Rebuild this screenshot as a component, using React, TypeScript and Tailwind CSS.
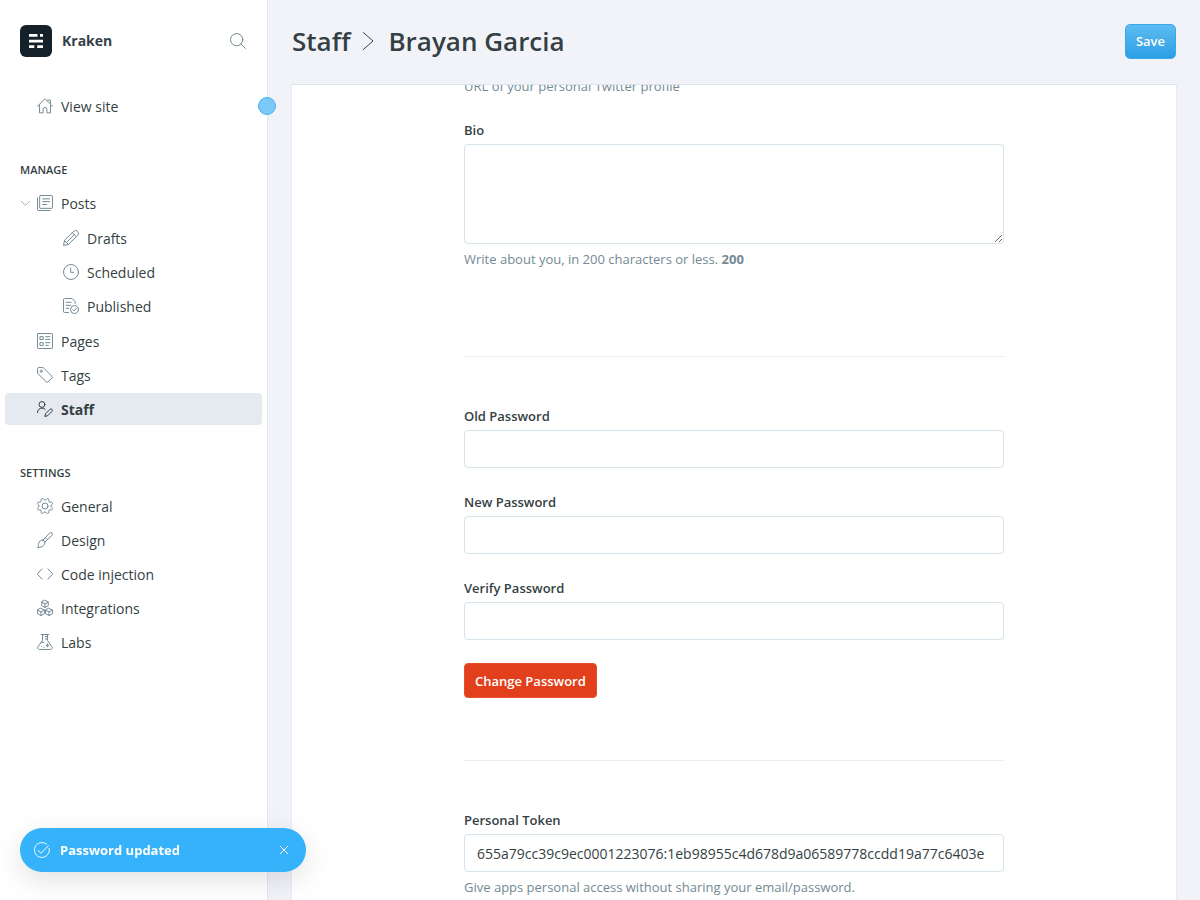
import { useState } from 'react';
import type { ReactNode } from 'react';

function Icon({ children, className = 'size-4', strokeWidth = 1.5 }: { children: ReactNode; className?: string; strokeWidth?: number }) {
  return (
    <svg
      viewBox="0 0 24 24"
      fill="none"
      stroke="currentColor"
      strokeWidth={strokeWidth}
      strokeLinecap="round"
      strokeLinejoin="round"
      aria-hidden="true"
      className={`shrink-0 overflow-visible ${className}`}
    >
      {children}
    </svg>
  );
}

const icons = {
  house: (
    <>
      <path d="M.8 12.5 10.9 2a1.5 1.5 0 0 1 2.2 0l10.1 10.5" />
      <path d="M3.8 11v11.3h5.3v-5.2a2.9 2.9 0 0 1 5.8 0v5.2h5.3V11" />
      <path d="M15.8 3.2h4.4v5" />
    </>
  ),
  posts: (
    <>
      <rect x="4" y=".8" width="19.2" height="19.2" rx="1" />
      <path d="M.8 4v17.7a1.5 1.5 0 0 0 1.5 1.5H20M8.5 5.8h10.3M8.5 10h10.3M8.5 14.3h6.2" />
    </>
  ),
  pencil: (
    <>
      <path d="m2.3 15.8-1.5 7.4 7.4-1.5L22.1 7.8a3.6 3.6 0 0 0 0-5.2l-.7-.7a3.6 3.6 0 0 0-5.2 0z" />
      <path d="m14 4.1 5.9 5.9M2.3 15.8l5.9 5.9M5.2 18.8 17 7" />
    </>
  ),
  clock: (
    <>
      <circle cx="12" cy="12" r="11.2" />
      <path d="M11.5 6v6.5h4.5" />
    </>
  ),
  published: (
    <>
      <path d="M8.5 21.7H2.3a1.5 1.5 0 0 1-1.5-1.5V2.3A1.5 1.5 0 0 1 2.3.8h11.3l4.6 4.6V8M4.8 6.5h7.5M4.8 11h6.5M4.8 15.5h4" />
      <circle cx="17.3" cy="17.3" r="6" />
      <path d="m14.7 17.5 1.9 1.9 3.4-4" />
    </>
  ),
  pages: (
    <>
      <rect x=".8" y=".8" width="22.4" height="22.4" rx="1" />
      <path d="M5 5.5h4.3v4.3H5zM5 14.5h4.3v4.3H5zM13 5.5h6.3M13 9.5h6.3M13 14.5h6.3M13 18.5h4" />
    </>
  ),
  tag: (
    <>
      <path d="M.8 8V2.3A1.5 1.5 0 0 1 2.3.8H8a3 3 0 0 1 2.1.9l12.5 12.5a1.5 1.5 0 0 1 0 2.1l-6.3 6.3a1.5 1.5 0 0 1-2.1 0L1.7 10.1A3 3 0 0 1 .8 8z" />
      <circle cx="6.4" cy="6.4" r="1.7" />
    </>
  ),
  staff: (
    <>
      <circle cx="7.5" cy="5.2" r="4.4" />
      <path d="M.8 17.3c0-4 2.8-6.6 6.7-6.6 2 0 3.7.7 4.9 1.9" />
      <path d="m15.7 22.1-4 1.1 1.1-4 7-7a2.1 2.1 0 0 1 2.9 2.9z" />
    </>
  ),
  gear: (
    <>
      <circle cx="12" cy="12" r="4.5" />
      <path d="M10.546 2.438a1.957 1.957 0 0 0 2.908 0L14.4 1.4a1.959 1.959 0 0 1 3.41 1.413l-.071 1.4A1.958 1.958 0 0 0 19.79 6.26l1.4-.071A1.959 1.959 0 0 1 22.6 9.6l-1.041.95a1.96 1.96 0 0 0 0 2.907l1.041.95a1.959 1.959 0 0 1-1.413 3.41l-1.4-.071a1.958 1.958 0 0 0-2.056 2.056l.071 1.4A1.959 1.959 0 0 1 14.4 22.6l-.95-1.041a1.957 1.957 0 0 0-2.908 0L9.6 22.6a1.959 1.959 0 0 1-3.41-1.413l.071-1.4A1.958 1.958 0 0 0 4.21 17.74l-1.4.071A1.958 1.958 0 0 1 1.4 14.4l1.041-.95a1.96 1.96 0 0 0 0-2.907L1.4 9.6a1.958 1.958 0 0 1 1.41-3.412l1.4.071A1.958 1.958 0 0 0 6.264 4.2l-.071-1.4A1.959 1.959 0 0 1 9.6 1.4z" />
    </>
  ),
  brush: (
    <>
      <path d="M8.8 12.3 19 1.6a2.4 2.4 0 0 1 3.5 3.4L11.7 15.2" />
      <path d="M8.8 12.3a4.2 4.2 0 0 1 2.9 2.9c.8 4.4-3.4 8-10.9 8 1.7-1.5 1.2-3.6 1.6-6 .6-3.5 3.5-5.4 6.4-4.9zM12.5 8.5l3 3" />
    </>
  ),
  code: <path d="M7.5 4.5.8 11.5a.8.8 0 0 0 0 1l6.700 7M16.500 4.500l6.700 7a.8.8 0 0 1 0 1l-6.700 7" />,
  blocks: (
    <>
      <path d="m12 .5 4.900 2.700v5.200L12 11.200 7.100 8.400V3.200zM7.100 3.200 12 5.900l4.900-2.700M12 5.900v5.300" />
      <path d="m6 12.500 5.200 2.700v5.300L6 23.300l-5.200-2.800v-5.300zM.8 15.200 6 17.900l5.200-2.700M6 17.900v5.400" />
      <path d="m18 12.500 5.200 2.700v5.300L18 23.300l-5.200-2.800v-5.300zM12.800 15.200l5.200 2.700 5.200-2.700M18 17.900v5.400" />
    </>
  ),
  flask: (
    <path d="M6.300.8h11.400M8.300.8v8.700L1.500 19.200a2.600 2.600 0 0 0 2.200 4h16.600a2.600 2.600 0 0 0 2.200-4L15.700 9.500V.8M6.300 12.500h4M12.300 4h3.400M12.300 7.500h3.400M15.800 14.800v4.400M13.600 17h4.400M7 18.200v.1M10.300 20v.1" />
  ),
};

type IconName = keyof typeof icons;

function NavItem({ icon, label, active = false, expandable = false, nested = false }: { icon: IconName; label: string; active?: boolean; expandable?: boolean; nested?: boolean }) {
  return (
    <li>
      <a
        href="#"
        aria-current={active ? 'page' : undefined}
        className={`flex h-8 items-center rounded pr-3 ${nested ? 'pl-[58px]' : expandable ? 'pl-4' : 'pl-8'} ${active ? 'bg-[#e5eaf1] font-bold' : ''}`}
      >
        {expandable && (
          <Icon className="mr-[7px] size-[9px] text-[#9aabb3]" strokeWidth={2.5}>
            <path d="m1 6 11 11L23 6" />
          </Icon>
        )}
        <Icon className={active ? 'size-4' : 'size-4 text-[#738a94]'}>{icons[icon]}</Icon>
        <span className="ml-2">{label}</span>
      </a>
    </li>
  );
}

function Field({ id, label, children }: { id: string; label: string; children: ReactNode }) {
  return (
    <div className="flex flex-col gap-1">
      <label htmlFor={id} className="text-[13px] leading-5 font-semibold">{label}</label>
      {children}
    </div>
  );
}

const inputClass = 'block h-[38px] w-full rounded border border-[#d6e3eb] bg-white px-3 text-[14px] text-[#343f44] outline-none';
const hintClass = 'text-[13px] leading-5 text-[#738a94]';

export default function App() {
  const [toast, setToast] = useState(true);
  return (
    <div className="flex h-screen overflow-hidden bg-[#f2f3f8] font-['Open_Sans','Noto_Sans',sans-serif] text-[14px] text-[#343f44]">
      <aside className="relative w-[268px] shrink-0 border-r border-[#e3e7ee] bg-white">
        <div className="flex items-center px-5 pt-[25px]">
          <svg viewBox="0 0 32 32" className="size-8" role="img" aria-label="Kraken logo">
            <rect width="32" height="32" rx="6" fill="#15212a" />
            <path fill="#fff" d="M9 9h8.500v2.800H9zM20 9h3v2.800h-3zM9 14.700h14v2.800H9zM9 20.300h5.300v2.700H9zM17.200 20.300H23v2.700h-5.800z" />
          </svg>
          <span className="ml-[10px] flex-1 text-[14px] leading-5 font-bold">Kraken</span>
          <button type="button" aria-label="Search" className="mr-px text-[#738a94]">
            <Icon>
              <circle cx="10" cy="10" r="9.2" />
              <path d="m16.500 16.500 6.700 6.700" />
            </Icon>
          </button>
        </div>

        <nav className="px-[5px]">
          <ul className="mt-[33px]">
            <NavItem icon="house" label="View site" />
          </ul>
          <h2 className="mt-[38px] ml-[15px] text-[11px] leading-5 font-semibold">MANAGE</h2>
          <ul className="mt-[7px] flex flex-col gap-[2px]">
            <NavItem icon="posts" label="Posts" expandable />
            <li className="py-px">
              <ul className="flex flex-col gap-[2px]">
                <NavItem icon="pencil" label="Drafts" nested />
                <NavItem icon="clock" label="Scheduled" nested />
                <NavItem icon="published" label="Published" nested />
              </ul>
            </li>
            <NavItem icon="pages" label="Pages" />
            <NavItem icon="tag" label="Tags" />
            <NavItem icon="staff" label="Staff" active />
          </ul>
          <h2 className="mt-[38px] ml-[15px] text-[11px] leading-5 font-semibold">SETTINGS</h2>
          <ul className="mt-[7px] flex flex-col gap-[2px]">
            <NavItem icon="gear" label="General" />
            <NavItem icon="brush" label="Design" />
            <NavItem icon="code" label="Code injection" />
            <NavItem icon="blocks" label="Integrations" />
            <NavItem icon="flask" label="Labs" />
          </ul>
        </nav>

        <button
          type="button"
          aria-label="Toggle menu"
          className="absolute top-[97px] -right-[9px] z-10 size-[18px] rounded-full border border-[#45b3f3] bg-[#7cc8f6]"
        />
      </aside>

      <main className="flex min-w-0 flex-1 flex-col px-6">
        <header className="flex h-[84px] shrink-0 items-center justify-between pb-[2px]">
          <h1 className="flex items-center text-[26px] leading-9 font-semibold">
            <a href="#">Staff</a>
            <Icon className="mr-[11px] ml-[9px] size-[18px]" strokeWidth={1.3}>
              <path d="m5.500.5 13.200 11.500L5.500 23.500" />
            </Icon>
            <span>Brayan Garcia</span>
          </h1>
          <button
            type="button"
            className="h-[35px] rounded-[5px] border border-[#3ba9e8] bg-linear-to-b from-[#5bbcf1] to-[#2b9fe4] px-[10px] pt-[2px] text-[13px] font-semibold text-white"
          >
            Save
          </button>
        </header>

        <section className="-mx-px min-h-0 flex-1 overflow-hidden border border-b-0 border-t-[#d9e6ef] border-r-[#e6ebf2] border-l-[#e9edf3] bg-white">
          <form className="mx-auto -mt-[9px] w-[540px] max-w-full" onSubmit={(e) => e.preventDefault()}>
            <p className={hintClass}>URL of your personal Twitter profile</p>
            <div className="mt-6">
              <Field id="bio" label="Bio">
                <textarea id="bio" className="block h-[100px] w-full resize-y rounded border border-[#d6e3eb] bg-white px-3 py-2 outline-none" />
              </Field>
              <p className={`mt-[5px] ${hintClass}`}>
                Write about you, in 200 characters or less. <strong className="font-bold">200</strong>
              </p>
            </div>

            <hr className="mt-[87px] border-[#e5eff5]" />

            <div className="mt-[49px] flex flex-col gap-6">
              <Field id="old" label="Old Password">
                <input id="old" type="password" className={inputClass} />
              </Field>
              <Field id="new" label="New Password">
                <input id="new" type="password" className={inputClass} />
              </Field>
              <Field id="verify" label="Verify Password">
                <input id="verify" type="password" className={inputClass} />
              </Field>
            </div>
            <button
              type="button"
              className="mt-[23px] block h-[35px] rounded border border-[#e6502d] bg-[#e2401c] px-[10px] pt-[2px] text-[13px] font-semibold text-white"
            >
              Change Password
            </button>

            <hr className="mt-[62px] border-[#e5eff5]" />

            <div className="mt-[49px]">
              <Field id="token" label="Personal Token">
                <input
                  id="token"
                  type="text"
                  readOnly
                  value="655a79cc39c9ec0001223076:1eb98955c4d678d9a06589778ccdd19a77c6403e"
                  className={inputClass}
                />
              </Field>
              <p className={`mt-[5px] ${hintClass}`}>Give apps personal access without sharing your email/password.</p>
            </div>
          </form>
        </section>
      </main>

      {toast && (
        <div role="status" className="fixed bottom-7 left-5 z-20 flex h-11 w-[286px] items-center rounded-full bg-[#35b2f9] pr-4 pl-[14px] text-white shadow-[0_8px_28px_rgba(0,0,0,0.12)]">
          <Icon strokeWidth={1.4}>
            <path d="M22.800 9.500A11.200 11.200 0 1 1 19 3.300" />
            <path d="m6 12.500 4.500 4.500L21.500 5.500" />
          </Icon>
          <span className="ml-[10px] flex-1 pt-px text-[13px] font-bold">Password updated</span>
          <button type="button" aria-label="Close notification" className="flex size-3 items-center justify-center" onClick={() => setToast(false)}>
            <Icon className="size-2" strokeWidth={3}>
              <path d="m1 1 22 22M23 1 1 23" />
            </Icon>
          </button>
        </div>
      )}
    </div>
  );
}
